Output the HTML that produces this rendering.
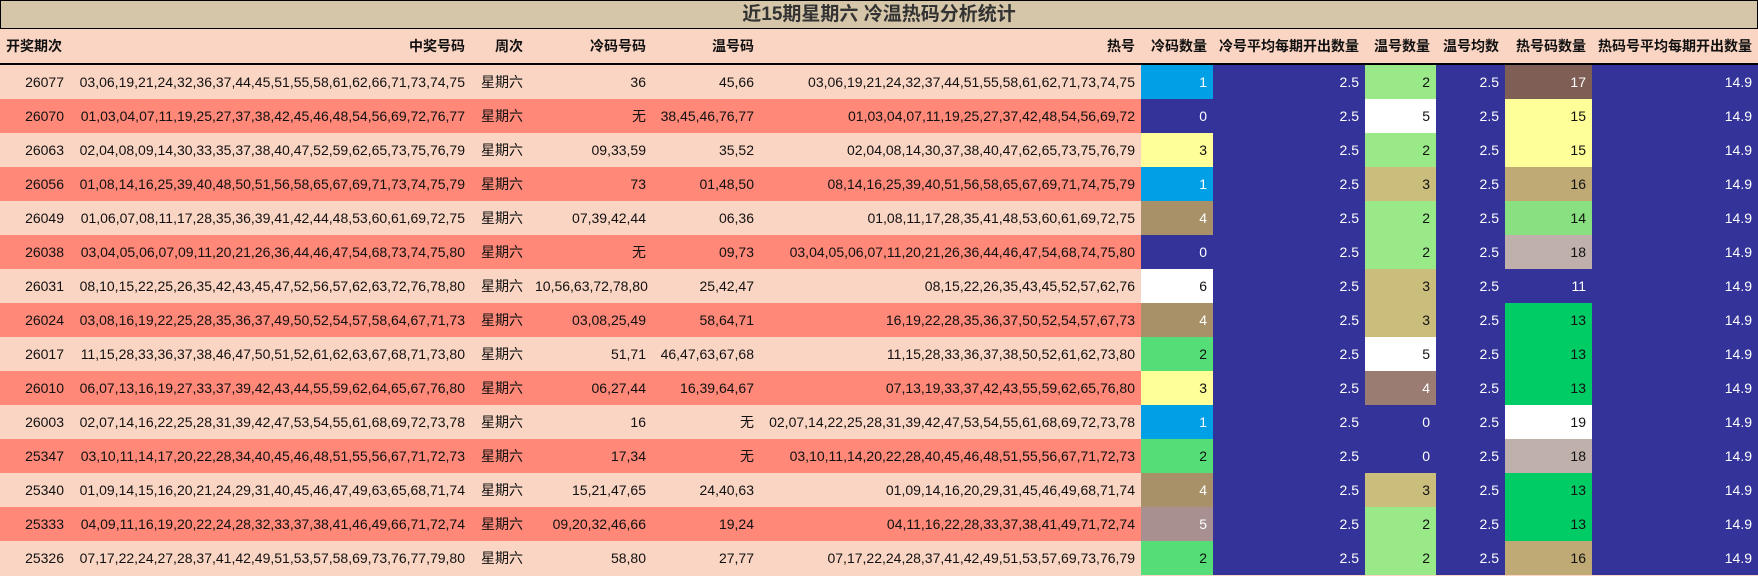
<!DOCTYPE html>
<html><head><meta charset="utf-8"><style>
body{margin:0;width:1758px;height:576px;overflow:hidden;background:#fbd5c3;font-family:"Liberation Sans","Noto Sans CJK SC",sans-serif;}
.title{height:27px;border:1px solid #000;background:#d6c6a9;text-align:center;font-weight:bold;font-size:19px;line-height:27px;color:#333;box-sizing:content-box;}
table{border-collapse:collapse;table-layout:fixed;width:1758px;font-size:14px;}
td,th{padding:0 6px;text-align:right;white-space:nowrap;overflow:hidden;height:34px;}
th{height:34px;font-weight:bold;border-bottom:2px solid #000;color:#111;}
tr.l{background:#fbd5c3}tr.d{background:#ff8878}
td{color:#111}
.n{background:#333399;color:#fff}
.w{color:#fff}
.cy{background:#00a0e6;color:#fff}.gr{background:#99e988}.br{background:#7f5f55;color:#fff}.ye{background:#ffff99}.wh{background:#fff}
.tn{background:#cbbd7c}.t2{background:#bfa975}.sb{background:#a89068;color:#fff}.g14{background:#88e080}.lm{background:#c0b0ac}
.g2{background:#00cc66}.g3{background:#55dd77}.gb{background:#9a7c72;color:#fff}.mv{background:#a89090;color:#fff}
</style></head><body>
<div class="title">近15期星期六 冷温热码分析统计</div>
<table>
<colgroup><col style="width:70px"><col style="width:401px"><col style="width:58px"><col style="width:123px"><col style="width:108px"><col style="width:381px"><col style="width:72px"><col style="width:152px"><col style="width:71px"><col style="width:69px"><col style="width:87px"><col style="width:166px"></colgroup>
<tr class="l"><th style="text-align:left">开奖期次</th><th>中奖号码</th><th>周次</th><th>冷码号码</th><th>温号码</th><th>热号</th><th>冷码数量</th><th>冷号平均每期开出数量</th><th>温号数量</th><th>温号均数</th><th>热号码数量</th><th>热码号平均每期开出数量</th></tr>
<tr class="l"><td>26077</td><td>03,06,19,21,24,32,36,37,44,45,51,55,58,61,62,66,71,73,74,75</td><td>星期六</td><td>36</td><td>45,66</td><td>03,06,19,21,24,32,37,44,51,55,58,61,62,71,73,74,75</td><td class="cy">1</td><td class="n">2.5</td><td class="gr">2</td><td class="n">2.5</td><td class="br">17</td><td class="n">14.9</td></tr>
<tr class="d"><td>26070</td><td>01,03,04,07,11,19,25,27,37,38,42,45,46,48,54,56,69,72,76,77</td><td>星期六</td><td>无</td><td>38,45,46,76,77</td><td>01,03,04,07,11,19,25,27,37,42,48,54,56,69,72</td><td class="n">0</td><td class="n">2.5</td><td class="wh">5</td><td class="n">2.5</td><td class="ye">15</td><td class="n">14.9</td></tr>
<tr class="l"><td>26063</td><td>02,04,08,09,14,30,33,35,37,38,40,47,52,59,62,65,73,75,76,79</td><td>星期六</td><td>09,33,59</td><td>35,52</td><td>02,04,08,14,30,37,38,40,47,62,65,73,75,76,79</td><td class="ye">3</td><td class="n">2.5</td><td class="gr">2</td><td class="n">2.5</td><td class="ye">15</td><td class="n">14.9</td></tr>
<tr class="d"><td>26056</td><td>01,08,14,16,25,39,40,48,50,51,56,58,65,67,69,71,73,74,75,79</td><td>星期六</td><td>73</td><td>01,48,50</td><td>08,14,16,25,39,40,51,56,58,65,67,69,71,74,75,79</td><td class="cy">1</td><td class="n">2.5</td><td class="tn">3</td><td class="n">2.5</td><td class="t2">16</td><td class="n">14.9</td></tr>
<tr class="l"><td>26049</td><td>01,06,07,08,11,17,28,35,36,39,41,42,44,48,53,60,61,69,72,75</td><td>星期六</td><td>07,39,42,44</td><td>06,36</td><td>01,08,11,17,28,35,41,48,53,60,61,69,72,75</td><td class="sb">4</td><td class="n">2.5</td><td class="gr">2</td><td class="n">2.5</td><td class="g14">14</td><td class="n">14.9</td></tr>
<tr class="d"><td>26038</td><td>03,04,05,06,07,09,11,20,21,26,36,44,46,47,54,68,73,74,75,80</td><td>星期六</td><td>无</td><td>09,73</td><td>03,04,05,06,07,11,20,21,26,36,44,46,47,54,68,74,75,80</td><td class="n">0</td><td class="n">2.5</td><td class="gr">2</td><td class="n">2.5</td><td class="lm">18</td><td class="n">14.9</td></tr>
<tr class="l"><td>26031</td><td>08,10,15,22,25,26,35,42,43,45,47,52,56,57,62,63,72,76,78,80</td><td>星期六</td><td>10,56,63,72,78,80</td><td>25,42,47</td><td>08,15,22,26,35,43,45,52,57,62,76</td><td class="wh">6</td><td class="n">2.5</td><td class="tn">3</td><td class="n">2.5</td><td class="n">11</td><td class="n">14.9</td></tr>
<tr class="d"><td>26024</td><td>03,08,16,19,22,25,28,35,36,37,49,50,52,54,57,58,64,67,71,73</td><td>星期六</td><td>03,08,25,49</td><td>58,64,71</td><td>16,19,22,28,35,36,37,50,52,54,57,67,73</td><td class="sb">4</td><td class="n">2.5</td><td class="tn">3</td><td class="n">2.5</td><td class="g2">13</td><td class="n">14.9</td></tr>
<tr class="l"><td>26017</td><td>11,15,28,33,36,37,38,46,47,50,51,52,61,62,63,67,68,71,73,80</td><td>星期六</td><td>51,71</td><td>46,47,63,67,68</td><td>11,15,28,33,36,37,38,50,52,61,62,73,80</td><td class="g3">2</td><td class="n">2.5</td><td class="wh">5</td><td class="n">2.5</td><td class="g2">13</td><td class="n">14.9</td></tr>
<tr class="d"><td>26010</td><td>06,07,13,16,19,27,33,37,39,42,43,44,55,59,62,64,65,67,76,80</td><td>星期六</td><td>06,27,44</td><td>16,39,64,67</td><td>07,13,19,33,37,42,43,55,59,62,65,76,80</td><td class="ye">3</td><td class="n">2.5</td><td class="gb">4</td><td class="n">2.5</td><td class="g2">13</td><td class="n">14.9</td></tr>
<tr class="l"><td>26003</td><td>02,07,14,16,22,25,28,31,39,42,47,53,54,55,61,68,69,72,73,78</td><td>星期六</td><td>16</td><td>无</td><td>02,07,14,22,25,28,31,39,42,47,53,54,55,61,68,69,72,73,78</td><td class="cy">1</td><td class="n">2.5</td><td class="n">0</td><td class="n">2.5</td><td class="wh">19</td><td class="n">14.9</td></tr>
<tr class="d"><td>25347</td><td>03,10,11,14,17,20,22,28,34,40,45,46,48,51,55,56,67,71,72,73</td><td>星期六</td><td>17,34</td><td>无</td><td>03,10,11,14,20,22,28,40,45,46,48,51,55,56,67,71,72,73</td><td class="g3">2</td><td class="n">2.5</td><td class="n">0</td><td class="n">2.5</td><td class="lm">18</td><td class="n">14.9</td></tr>
<tr class="l"><td>25340</td><td>01,09,14,15,16,20,21,24,29,31,40,45,46,47,49,63,65,68,71,74</td><td>星期六</td><td>15,21,47,65</td><td>24,40,63</td><td>01,09,14,16,20,29,31,45,46,49,68,71,74</td><td class="sb">4</td><td class="n">2.5</td><td class="tn">3</td><td class="n">2.5</td><td class="g2">13</td><td class="n">14.9</td></tr>
<tr class="d"><td>25333</td><td>04,09,11,16,19,20,22,24,28,32,33,37,38,41,46,49,66,71,72,74</td><td>星期六</td><td>09,20,32,46,66</td><td>19,24</td><td>04,11,16,22,28,33,37,38,41,49,71,72,74</td><td class="mv">5</td><td class="n">2.5</td><td class="gr">2</td><td class="n">2.5</td><td class="g2">13</td><td class="n">14.9</td></tr>
<tr class="l"><td>25326</td><td>07,17,22,24,27,28,37,41,42,49,51,53,57,58,69,73,76,77,79,80</td><td>星期六</td><td>58,80</td><td>27,77</td><td>07,17,22,24,28,37,41,42,49,51,53,57,69,73,76,79</td><td class="g3">2</td><td class="n">2.5</td><td class="gr">2</td><td class="n">2.5</td><td class="t2">16</td><td class="n">14.9</td></tr>
</table>
</body></html>
